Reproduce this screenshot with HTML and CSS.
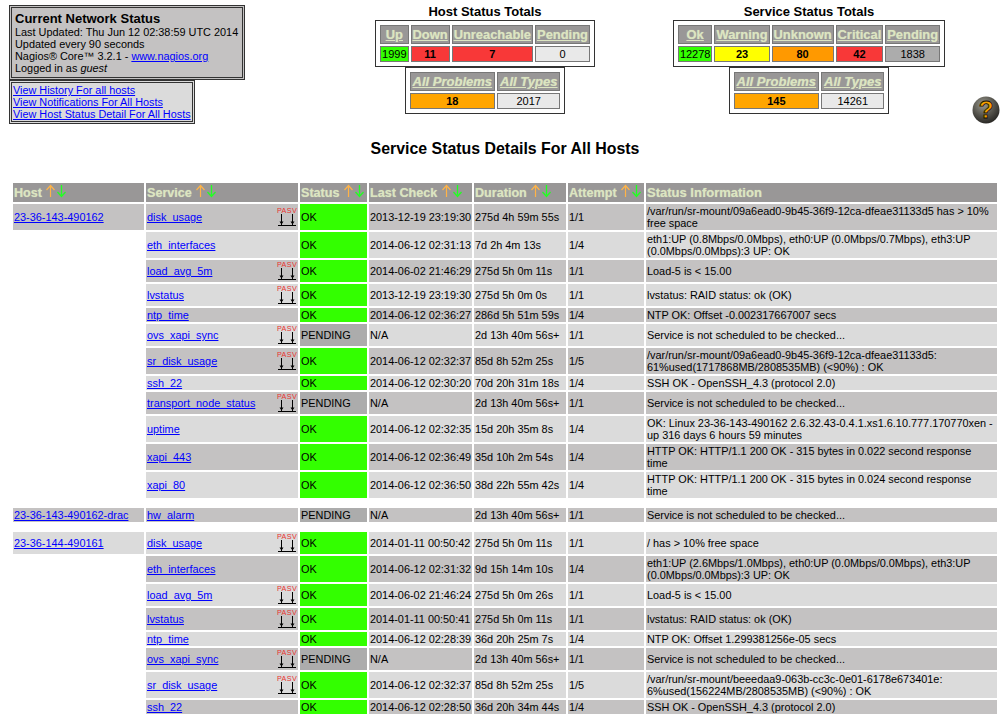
FILE: index.html
```html
<!DOCTYPE html>
<html lang="en">
<head>
<meta charset="utf-8">
<title>Current Network Status</title>
<link rel="stylesheet" href="styles.css">
</head>
<body>
<svg class="defs" width="0" height="0" aria-hidden="true">
  <defs>
    <symbol id="sort" viewBox="0 0 22 14">
      <path d="M5.5 13V2M1.5 6l4-4.5 4 4.5" fill="none" stroke="#ffb347" stroke-width="1.2"/>
      <path d="M16.5 1v11M12.5 8l4 4.5 4-4.5" fill="none" stroke="#22ff22" stroke-width="1.3"/>
    </symbol>
    <symbol id="pasv" viewBox="0 0 20 22">
      <text x="10" y="7" text-anchor="middle" class="pasv-text">PASV</text>
      <path d="M4.5 8v11M15.5 8v11M1 19.5h18" stroke="#000" stroke-width="1" fill="none"/>
      <path d="M2.5 15.5h4L4.5 18.5zM13.5 15.5h4L15.5 18.5z" fill="#000"/>
    </symbol>
    <radialGradient id="ball" cx="40%" cy="30%" r="75%">
      <stop offset="0" stop-color="#9a9a90"/>
      <stop offset=".55" stop-color="#55534c"/>
      <stop offset="1" stop-color="#23221f"/>
    </radialGradient>
  </defs>
</svg>

<header class="top">
  <div class="top-left">
    <div class="info-box">
      <div class="info-title">Current Network Status</div>
      <div>Last Updated: Thu Jun 12 02:38:59 UTC 2014</div>
      <div>Updated every 90 seconds</div>
      <div>Nagios® Core™ 3.2.1 - <a href="#">www.nagios.org</a></div>
      <div>Logged in as <i>guest</i></div>
    </div>
    <div class="link-box">
      <a href="#">View History For all hosts</a><br>
      <a href="#">View Notifications For All Hosts</a><br>
      <a href="#">View Host Status Detail For All Hosts</a>
    </div>
  </div>

  <section class="totals totals-host">
    <h2 class="totals-title">Host Status Totals</h2>
    <table class="tot">
      <tr><th><a href="#">Up</a></th><th><a href="#">Down</a></th><th><a href="#">Unreachable</a></th><th><a href="#">Pending</a></th></tr>
      <tr><td class="ok">1999</td><td class="crit b">11</td><td class="crit b">7</td><td class="none">0</td></tr>
    </table>
    <table class="tot sub">
      <tr><th><a href="#"><i>All Problems</i></a></th><th><a href="#"><i>All Types</i></a></th></tr>
      <tr><td class="prob b">18</td><td class="none">2017</td></tr>
    </table>
  </section>

  <section class="totals totals-service">
    <h2 class="totals-title">Service Status Totals</h2>
    <table class="tot">
      <tr><th><a href="#">Ok</a></th><th><a href="#">Warning</a></th><th><a href="#">Unknown</a></th><th><a href="#">Critical</a></th><th><a href="#">Pending</a></th></tr>
      <tr><td class="ok">12278</td><td class="warn b">23</td><td class="unk b">80</td><td class="crit b">42</td><td class="pend">1838</td></tr>
    </table>
    <table class="tot sub">
      <tr><th><a href="#"><i>All Problems</i></a></th><th><a href="#"><i>All Types</i></a></th></tr>
      <tr><td class="prob b">145</td><td class="none">14261</td></tr>
    </table>
  </section>

  <svg class="help" viewBox="0 0 28 28" width="28" height="28" role="img" aria-label="Help">
    <circle cx="14" cy="14" r="13.5" fill="url(#ball)"/>
    <text x="14" y="22" text-anchor="middle" class="help-text">?</text>
  </svg>
</header>

<h1 class="page-title">Service Status Details For All Hosts</h1>

<table class="status">
  <colgroup>
    <col class="c-host"><col class="c-service"><col class="c-state"><col class="c-check"><col class="c-dur"><col class="c-att"><col class="c-info">
  </colgroup>
  <thead>
    <tr>
      <th>Host <svg class="sort"><use href="#sort"/></svg></th>
      <th>Service <svg class="sort"><use href="#sort"/></svg></th>
      <th>Status <svg class="sort"><use href="#sort"/></svg></th>
      <th>Last Check <svg class="sort"><use href="#sort"/></svg></th>
      <th>Duration <svg class="sort"><use href="#sort"/></svg></th>
      <th>Attempt <svg class="sort"><use href="#sort"/></svg></th>
      <th class="th-info">Status Information</th>
    </tr>
  </thead>
  <tbody>
    <tr class="odd"><td class="host"><a href="#">23-36-143-490162</a></td><td class="svc"><div class="svc-in"><a href="#">disk_usage</a><svg class="pasv"><use href="#pasv"/></svg></div></td><td class="st-ok">OK</td><td>2013-12-19 23:19:30</td><td>275d 4h 59m 55s</td><td>1/1</td><td class="msg">/var/run/sr-mount/09a6ead0-9b45-36f9-12ca-dfeae31133d5 has &gt; 10% free space</td></tr>
    <tr class="even"><td class="blank"></td><td class="svc"><div class="svc-in"><a href="#">eth_interfaces</a></div></td><td class="st-ok">OK</td><td>2014-06-12 02:31:13</td><td>7d 2h 4m 13s</td><td>1/4</td><td class="msg">eth1:UP (0.8Mbps/0.0Mbps), eth0:UP (0.0Mbps/0.7Mbps), eth3:UP (0.0Mbps/0.0Mbps):3 UP: OK</td></tr>
    <tr class="odd"><td class="blank"></td><td class="svc"><div class="svc-in"><a href="#">load_avg_5m</a><svg class="pasv"><use href="#pasv"/></svg></div></td><td class="st-ok">OK</td><td>2014-06-02 21:46:29</td><td>275d 5h 0m 11s</td><td>1/1</td><td class="msg">Load-5 is &lt; 15.00</td></tr>
    <tr class="even"><td class="blank"></td><td class="svc"><div class="svc-in"><a href="#">lvstatus</a><svg class="pasv"><use href="#pasv"/></svg></div></td><td class="st-ok">OK</td><td>2013-12-19 23:19:30</td><td>275d 5h 0m 0s</td><td>1/1</td><td class="msg">lvstatus: RAID status: ok (OK)</td></tr>
    <tr class="odd"><td class="blank"></td><td class="svc"><div class="svc-in"><a href="#">ntp_time</a></div></td><td class="st-ok">OK</td><td>2014-06-12 02:36:27</td><td>286d 5h 51m 59s</td><td>1/4</td><td class="msg">NTP OK: Offset -0.002317667007 secs</td></tr>
    <tr class="even"><td class="blank"></td><td class="svc"><div class="svc-in"><a href="#">ovs_xapi_sync</a><svg class="pasv"><use href="#pasv"/></svg></div></td><td class="st-pend">PENDING</td><td>N/A</td><td>2d 13h 40m 56s+</td><td>1/1</td><td class="msg">Service is not scheduled to be checked...</td></tr>
    <tr class="odd"><td class="blank"></td><td class="svc"><div class="svc-in"><a href="#">sr_disk_usage</a><svg class="pasv"><use href="#pasv"/></svg></div></td><td class="st-ok">OK</td><td>2014-06-12 02:32:37</td><td>85d 8h 52m 25s</td><td>1/5</td><td class="msg">/var/run/sr-mount/09a6ead0-9b45-36f9-12ca-dfeae31133d5: 61%used(1717868MB/2808535MB) (&lt;90%) : OK</td></tr>
    <tr class="even"><td class="blank"></td><td class="svc"><div class="svc-in"><a href="#">ssh_22</a></div></td><td class="st-ok">OK</td><td>2014-06-12 02:30:20</td><td>70d 20h 31m 18s</td><td>1/4</td><td class="msg">SSH OK - OpenSSH_4.3 (protocol 2.0)</td></tr>
    <tr class="odd"><td class="blank"></td><td class="svc"><div class="svc-in"><a href="#">transport_node_status</a><svg class="pasv"><use href="#pasv"/></svg></div></td><td class="st-pend">PENDING</td><td>N/A</td><td>2d 13h 40m 56s+</td><td>1/1</td><td class="msg">Service is not scheduled to be checked...</td></tr>
    <tr class="even"><td class="blank"></td><td class="svc"><div class="svc-in"><a href="#">uptime</a></div></td><td class="st-ok">OK</td><td>2014-06-12 02:32:35</td><td>15d 20h 35m 8s</td><td>1/4</td><td class="msg">OK: Linux 23-36-143-490162 2.6.32.43-0.4.1.xs1.6.10.777.170770xen - up 316 days 6 hours 59 minutes</td></tr>
    <tr class="odd"><td class="blank"></td><td class="svc"><div class="svc-in"><a href="#">xapi_443</a></div></td><td class="st-ok">OK</td><td>2014-06-12 02:36:49</td><td>35d 10h 2m 54s</td><td>1/4</td><td class="msg">HTTP OK: HTTP/1.1 200 OK - 315 bytes in 0.022 second response<br>time</td></tr>
    <tr class="even"><td class="blank"></td><td class="svc"><div class="svc-in"><a href="#">xapi_80</a></div></td><td class="st-ok">OK</td><td>2014-06-12 02:36:50</td><td>38d 22h 55m 42s</td><td>1/4</td><td class="msg">HTTP OK: HTTP/1.1 200 OK - 315 bytes in 0.024 second response<br>time</td></tr>
    <tr class="spacer"><td colspan="7"></td></tr>
    <tr class="odd"><td class="host"><a href="#">23-36-143-490162-drac</a></td><td class="svc"><div class="svc-in"><a href="#">hw_alarm</a></div></td><td class="st-pend">PENDING</td><td>N/A</td><td>2d 13h 40m 56s+</td><td>1/1</td><td class="msg">Service is not scheduled to be checked...</td></tr>
    <tr class="spacer"><td colspan="7"></td></tr>
    <tr class="even"><td class="host"><a href="#">23-36-144-490161</a></td><td class="svc"><div class="svc-in"><a href="#">disk_usage</a><svg class="pasv"><use href="#pasv"/></svg></div></td><td class="st-ok">OK</td><td>2014-01-11 00:50:42</td><td>275d 5h 0m 11s</td><td>1/1</td><td class="msg">/ has &gt; 10% free space</td></tr>
    <tr class="odd"><td class="blank"></td><td class="svc"><div class="svc-in"><a href="#">eth_interfaces</a></div></td><td class="st-ok">OK</td><td>2014-06-12 02:31:32</td><td>9d 15h 14m 10s</td><td>1/4</td><td class="msg">eth1:UP (2.6Mbps/1.0Mbps), eth0:UP (0.0Mbps/0.0Mbps), eth3:UP (0.0Mbps/0.0Mbps):3 UP: OK</td></tr>
    <tr class="even"><td class="blank"></td><td class="svc"><div class="svc-in"><a href="#">load_avg_5m</a><svg class="pasv"><use href="#pasv"/></svg></div></td><td class="st-ok">OK</td><td>2014-06-02 21:46:24</td><td>275d 5h 0m 26s</td><td>1/1</td><td class="msg">Load-5 is &lt; 15.00</td></tr>
    <tr class="odd"><td class="blank"></td><td class="svc"><div class="svc-in"><a href="#">lvstatus</a><svg class="pasv"><use href="#pasv"/></svg></div></td><td class="st-ok">OK</td><td>2014-01-11 00:50:41</td><td>275d 5h 0m 11s</td><td>1/1</td><td class="msg">lvstatus: RAID status: ok (OK)</td></tr>
    <tr class="even"><td class="blank"></td><td class="svc"><div class="svc-in"><a href="#">ntp_time</a></div></td><td class="st-ok">OK</td><td>2014-06-12 02:28:39</td><td>36d 20h 25m 7s</td><td>1/4</td><td class="msg">NTP OK: Offset 1.299381256e-05 secs</td></tr>
    <tr class="odd"><td class="blank"></td><td class="svc"><div class="svc-in"><a href="#">ovs_xapi_sync</a><svg class="pasv"><use href="#pasv"/></svg></div></td><td class="st-pend">PENDING</td><td>N/A</td><td>2d 13h 40m 56s+</td><td>1/1</td><td class="msg">Service is not scheduled to be checked...</td></tr>
    <tr class="even"><td class="blank"></td><td class="svc"><div class="svc-in"><a href="#">sr_disk_usage</a><svg class="pasv"><use href="#pasv"/></svg></div></td><td class="st-ok">OK</td><td>2014-06-12 02:32:37</td><td>85d 8h 52m 25s</td><td>1/5</td><td class="msg">/var/run/sr-mount/beeedaa9-063b-cc3c-0e01-6178e673401e: 6%used(156224MB/2808535MB) (&lt;90%) : OK</td></tr>
    <tr class="odd"><td class="blank"></td><td class="svc"><div class="svc-in"><a href="#">ssh_22</a></div></td><td class="st-ok">OK</td><td>2014-06-12 02:28:50</td><td>36d 20h 34m 44s</td><td>1/4</td><td class="msg">SSH OK - OpenSSH_4.3 (protocol 2.0)</td></tr>
  </tbody>
</table>
</body>
</html>
```

FILE: styles.css
```css
html, body { margin: 0; padding: 0; background: #fff; }
body {
  font-family: "Liberation Sans", Arial, sans-serif;
  font-size: 11px;
  line-height: 12px;
  color: #000;
  overflow-x: hidden;
}
a { color: #0000ff; text-decoration: underline; }
.defs { position: absolute; }

/* Top band */
.top { display: flex; align-items: flex-start; height: 128px; padding: 5px 0 0 9px; box-sizing: border-box; }
.top-left { width: 326px; flex: none; display: flex; flex-direction: column; align-items: flex-start; }
.info-box {
  width: 236px; height: 75px; box-sizing: border-box;
  border: 3px double #333; background: #c4c2c2;
  padding: 3px 0 0 3px; font-size: 10.9px;
}
.info-title { font-size: 13px; font-weight: bold; line-height: 15px; }
.link-box {
  width: 186px; height: 44px; box-sizing: border-box;
  border: 3px double #333; background: #dbdbdb;
  padding: 1px 0 0 1px; line-height: 12px; font-size: 10.85px; white-space: nowrap;
}

.totals { flex: none; display: flex; flex-direction: column; align-items: center; }
.totals-host { width: 300px; }
.totals-service { width: 320px; margin-left: 14px; }
.totals-title { margin: 0 0 2px; font-size: 13px; line-height: 13px; font-weight: bold; }
.tot {
  border: 1px solid #333; border-spacing: 2px; padding: 2px;
  background: #fff; border-collapse: separate;
}
.tot th {
  background: #999797; border: 1px solid #777; padding: 0 1px;
  height: 17px; font-size: 12.9px; line-height: 15px; font-weight: bold; white-space: nowrap;
}
.tot.sub th { font-size: 13px; padding: 0 2px; }
.tot th a { color: #dce5c1; text-shadow: 0 0 1px rgba(220, 229, 193, .7); }
.tot td {
  border: 1px solid #777; padding: 0 1px; height: 14px;
  text-align: center; font-size: 11px; line-height: 12px;
}
.tot .b { font-weight: bold; }
.ok { background: #33ff00; }
.crit { background: #f83838; }
.none { background: #e9e9e9; }
.prob { background: #ffa500; }
.warn { background: #ffff00; }
.unk { background: #ff9900; }
.pend { background: #acacac; }

.help { flex: none; margin: 91px 0 0 3px; }
.help-text { font: bold 24px "Liberation Sans", Arial, sans-serif; fill: #f5a000; stroke: #120c00; stroke-width: .8px; }

.page-title { margin: 12px 0 0; height: 41px; text-align: center; font-size: 15.9px; line-height: 18px; font-weight: bold; padding-left: 6px; }

/* Main table */
.status {
  table-layout: fixed; border-collapse: separate; border-spacing: 2px;
  width: 988px; margin-left: 11px;
}
.c-host { width: 131px; }
.c-service { width: 152px; }
.c-state { width: 67px; }
.c-check { width: 103px; }
.c-dur { width: 92px; }
.c-att { width: 76px; }
.c-info { width: 351px; }
.status th {
  background: #999797; color: #dce5c1; text-shadow: 0 0 1px rgba(220, 229, 193, .7);
  text-align: left; padding: 1px 0 1px 1px; height: 19px; box-sizing: border-box;
  font-size: 12.6px; line-height: 15px; font-weight: bold; white-space: nowrap;
}
.status .th-info { font-size: 13px; }
.sort { width: 22px; height: 14px; vertical-align: -1px; }
.status td { padding: 1px 0 1px 1px; vertical-align: middle; overflow: hidden; font-size: 10.9px; white-space: nowrap; }
.status .msg { white-space: normal; }
.status .svc { padding: 0 1px; }
.svc-in { display: flex; align-items: center; justify-content: space-between; min-height: 14px; }
.pasv { width: 20px; height: 22px; flex: none; display: block; }
.pasv-text { font: 7.2px "Liberation Sans", Arial, sans-serif; fill: #e8322f; letter-spacing: .4px; }
.odd td { background: #c4c2c2; }
.even td { background: #dbdbdb; }
.status .blank { background: #fff; }
.status .st-ok { background: #33ff00; }
.status .st-pend { background: #acacac; }
.spacer td { background: #fff; height: 4px; padding: 1px; }
```
